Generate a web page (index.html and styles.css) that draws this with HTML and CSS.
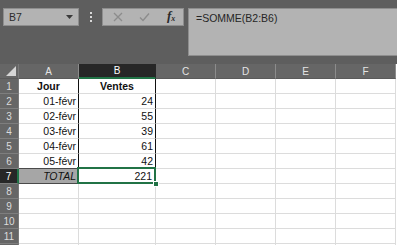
FILE: index.html
```html
<!DOCTYPE html>
<html lang="fr">
<head>
<meta charset="utf-8">
<link rel="stylesheet" href="styles.css">
</head>
<body>
<div class="app">
  <div class="toolbar">
    <div class="namebox">
      <span class="ref">B7</span>
      <svg class="caret" width="7" height="4" viewBox="0 0 7 4"><path d="M0 0H7L3.5 4Z" fill="#3a3a3a"/></svg>
    </div>
    <div class="dots"><i></i><i></i><i></i></div>
    <div class="fxbox">
      <svg class="ico" width="10" height="10" viewBox="0 0 10 10"><path d="M1 1L9 9M9 1L1 9" stroke="#8c8c8c" stroke-width="1.3"/></svg>
      <svg class="ico" width="11" height="10" viewBox="0 0 11 10"><path d="M1 5.5L4 8.5L10 1.5" stroke="#8c8c8c" stroke-width="1.4" fill="none"/></svg>
      <span class="fx">f<sub>x</sub></span>
    </div>
    <div class="formula">=SOMME(B2:B6)</div>
  </div>
  <div class="sheet">
    <div class="row head">
      <div class="rh corner"><svg width="10" height="10" viewBox="0 0 10 10"><path d="M10 0V10H0Z" fill="#d6d6d6"/></svg></div>
      <div class="ch ca">A</div>
      <div class="ch cb sel">B</div>
      <div class="ch cc">C</div>
      <div class="ch cd">D</div>
      <div class="ch ce">E</div>
      <div class="ch cf">F</div>
    </div>
    <div class="row">
      <div class="rh">1</div>
      <div class="c ca tb center bold">Jour</div>
      <div class="c cb tb center bold">Ventes</div>
      <div class="c cc"></div><div class="c cd"></div><div class="c ce"></div><div class="c cf"></div>
    </div>
    <div class="row">
      <div class="rh">2</div>
      <div class="c ca tb">01-févr</div>
      <div class="c cb tb">24</div>
      <div class="c cc"></div><div class="c cd"></div><div class="c ce"></div><div class="c cf"></div>
    </div>
    <div class="row">
      <div class="rh">3</div>
      <div class="c ca tb">02-févr</div>
      <div class="c cb tb">55</div>
      <div class="c cc"></div><div class="c cd"></div><div class="c ce"></div><div class="c cf"></div>
    </div>
    <div class="row">
      <div class="rh">4</div>
      <div class="c ca tb">03-févr</div>
      <div class="c cb tb">39</div>
      <div class="c cc"></div><div class="c cd"></div><div class="c ce"></div><div class="c cf"></div>
    </div>
    <div class="row">
      <div class="rh">5</div>
      <div class="c ca tb">04-févr</div>
      <div class="c cb tb">61</div>
      <div class="c cc"></div><div class="c cd"></div><div class="c ce"></div><div class="c cf"></div>
    </div>
    <div class="row">
      <div class="rh">6</div>
      <div class="c ca tb last">05-févr</div>
      <div class="c cb tb">42</div>
      <div class="c cc"></div><div class="c cd"></div><div class="c ce"></div><div class="c cf"></div>
    </div>
    <div class="row">
      <div class="rh sel">7</div>
      <div class="c ca total">TOTAL</div>
      <div class="c cb active">221<span class="handle"></span></div>
      <div class="c cc"></div><div class="c cd"></div><div class="c ce"></div><div class="c cf"></div>
    </div>
    <div class="row">
      <div class="rh">8</div>
      <div class="c ca"></div><div class="c cb"></div><div class="c cc"></div><div class="c cd"></div><div class="c ce"></div><div class="c cf"></div>
    </div>
    <div class="row">
      <div class="rh">9</div>
      <div class="c ca"></div><div class="c cb"></div><div class="c cc"></div><div class="c cd"></div><div class="c ce"></div><div class="c cf"></div>
    </div>
    <div class="row">
      <div class="rh">10</div>
      <div class="c ca"></div><div class="c cb"></div><div class="c cc"></div><div class="c cd"></div><div class="c ce"></div><div class="c cf"></div>
    </div>
    <div class="row">
      <div class="rh">11</div>
      <div class="c ca"></div><div class="c cb"></div><div class="c cc"></div><div class="c cd"></div><div class="c ce"></div><div class="c cf"></div>
    </div>
    <div class="row stub">
      <div class="rh"></div>
      <div class="c ca"></div><div class="c cb"></div><div class="c cc"></div><div class="c cd"></div><div class="c ce"></div><div class="c cf"></div>
    </div>
  </div>
</div>
</body>
</html>
```
FILE: styles.css
```css
* { box-sizing: border-box; }
html, body { margin: 0; padding: 0; }
body {
  width: 397px;
  height: 245px;
  overflow: hidden;
  background: #ffffff;
  font-family: "Liberation Sans", Arial, sans-serif;
}
.app { width: 397px; height: 245px; overflow: hidden; }

.toolbar {
  height: 64px;
  background: #5e5e5e;
  display: flex;
  align-items: flex-start;
  padding: 8px 0 0 3px;
}
.namebox {
  width: 76px;
  height: 18px;
  background: #b3b3b3;
  border: 1px solid #8e8e8e;
  display: flex;
  align-items: center;
  justify-content: space-between;
  padding: 0 5px 0 5px;
  font-size: 10.5px;
  color: #2c2c2c;
}
.dots {
  width: 23px;
  height: 18px;
  display: flex;
  flex-direction: column;
  align-items: center;
  justify-content: center;
  gap: 2px;
}
.dots i {
  display: block;
  width: 2px;
  height: 2px;
  background: #d8d8d8;
}
.fxbox {
  width: 82px;
  height: 18px;
  background: #b3b3b3;
  border: 1px solid #8e8e8e;
  display: flex;
  align-items: center;
  padding: 0 0 0 10px;
  gap: 16px;
}
.fx {
  font-family: "Liberation Serif", "Times New Roman", serif;
  font-style: italic;
  font-weight: bold;
  font-size: 13px;
  line-height: 13px;
  color: #2a2a2a;
  margin-left: 1px;
}
.fx sub { font-size: 8px; vertical-align: -1px; }
.formula {
  margin-left: 4px;
  flex: 1;
  height: 48px;
  background: #b3b3b3;
  border-top: 1px solid #8e8e8e;
  border-left: 1px solid #8e8e8e;
  border-bottom: 1px solid #8e8e8e;
  padding: 3px 0 0 7px;
  font-size: 10.5px;
  color: #262626;
}

.sheet { background: #ffffff; }
.row { display: flex; height: 15px; }
.row > div { height: 15px; flex: none; }
.rh {
  width: 19px;
  background: #666666;
  border-bottom: 1px solid #7e7e7e;
  border-right: 1px solid #7a7a7a;
  color: #dcdcdc;
  font-size: 10px;
  display: flex;
  align-items: center;
  justify-content: center;
}
.rh.sel { background: #272727; color: #ffffff; border-right: 2px solid #217346; }
.corner { align-items: flex-end; justify-content: flex-end; padding: 0 2px 2px 0; border-bottom: 1px solid #5a5a5a; }
.ca { width: 60px; }
.cb { width: 77px; }
.cc, .cd, .ce, .cf { width: 60px; }
.ch {
  background: #666666;
  color: #e4e4e4;
  font-size: 10px;
  display: flex;
  align-items: center;
  justify-content: center;
  border-right: 1px solid #8c8c8c;
  border-bottom: 1px solid #5a5a5a;
}
.ch.sel { background: #272727; color: #ffffff; border-bottom: 2px solid #217346; border-right-color: #272727; }

.c {
  border-right: 1px solid #dcdcdc;
  border-bottom: 1px solid #dcdcdc;
  font-size: 10.5px;
  color: #111111;
  display: flex;
  align-items: center;
  justify-content: flex-end;
  padding: 0 2px 0 2px;
  white-space: nowrap;
}
.c.center { justify-content: center; }
.c.bold { font-weight: bold; }
.ca.tb { border-right: 1px solid #111111; }
.cb.tb { border-right: 1px solid #111111; }
.ca.last { border-bottom: 1px solid #4a4a4a; }
.total {
  background: #a6a6a6;
  font-style: italic;
  border-bottom: 1px solid #4a4a4a;
  border-right: 1px solid #4a4a4a;
}
.active { position: relative; padding-right: 3px; }
.active::after {
  content: "";
  position: absolute;
  left: -2px;
  top: -2px;
  right: -1px;
  bottom: -1px;
  border: 2px solid #217346;
}
.handle {
  position: absolute;
  right: -4px;
  bottom: -4px;
  width: 6px;
  height: 6px;
  background: #217346;
  border: 1px solid #ffffff;
  z-index: 2;
}
```
